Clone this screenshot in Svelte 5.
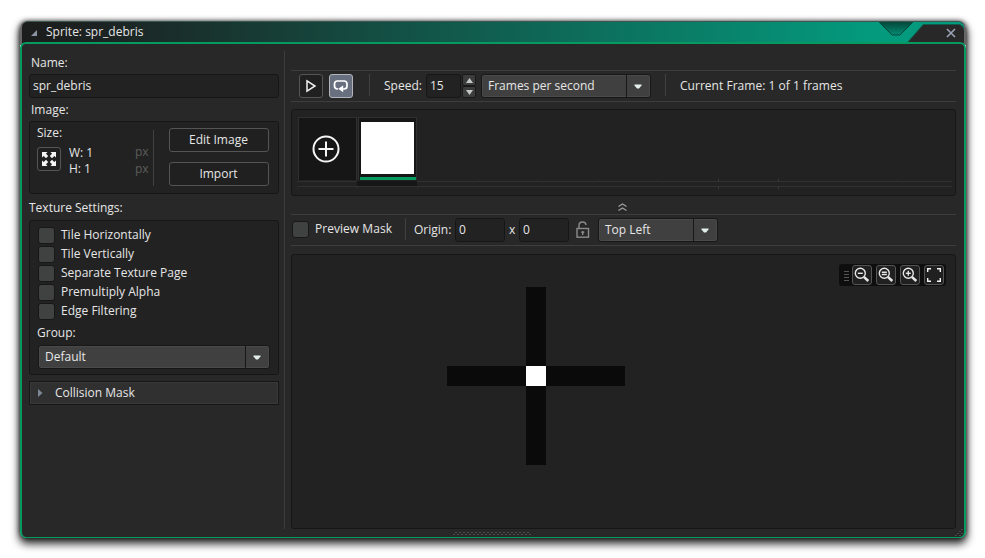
<script>
  const textureOptions = [
    'Tile Horizontally',
    'Tile Vertically',
    'Separate Texture Page',
    'Premultiply Alpha',
    'Edge Filtering'
  ];
  const zoomModes = ['out', 'reset', 'in'];
  let name = 'spr_debris';
</script>

{#snippet select(label, cls)}
  <div class="select {cls}">
    <span class="value">{label}</span>
    <span class="drop">
      <svg width="8" height="5" viewBox="0 0 8 5"><path d="M0.5 0.5h7v1L5 4.5H3L0.5 1.5z" fill="#e3efea" /></svg>
    </span>
  </div>
{/snippet}

<div class="desktop">
  <div class="window">
    <header class="titlebar">
      <svg class="fold" width="6" height="6"><path d="M6 0v6H0z" fill="#8b94a3" /></svg>
      <span class="title">Sprite: {name}</span>
      <svg class="decor" width="91" height="21" viewBox="1 0 91 21">
        <defs>
          <linearGradient id="notch" x1="0" y1="0" x2="0" y2="1">
            <stop offset="0" stop-color="#04483b" />
            <stop offset="1" stop-color="#048a72" />
          </linearGradient>
        </defs>
        <path d="M7 0l13 13h8L41 0z" fill="url(#notch)" />
        <path d="M7 0l13 13h8L41 0" fill="none" stroke="#04473a" />
        <path d="M51 2.500H88Q92 4 92 9V21H35z" fill="#282828" />
        <path d="M35 21L51.500 2.500H88l4 4" fill="none" stroke="#15594b" />
        <path d="M75 7l8 8M83 7l-8 8" stroke="#9aa3b3" stroke-width="1.600" />
      </svg>
    </header>

    <main class="body">
      <aside class="side">
        <div class="label name-label">Name:</div>
        <div class="input name-input">{name}</div>
        <div class="label image-label">Image:</div>
        <section class="panel image-panel">
          <div class="size">
            <div class="size-title">Size:</div>
            <div class="size-row">
              <button class="btn icon" aria-label="Resize">
                <svg width="14" height="14" viewBox="0 0 14 14" fill="#f4f4f4">
                  <path d="M0 0h5.500L4 1.700 6.200 4 4 6.200 1.700 4 0 5.500zM14 0H8.500L10 1.700 7.800 4 10 6.200 12.300 4 14 5.500zM0 14h5.500L4 12.300 6.200 10 4 7.800 1.700 10 0 8.500zM14 14H8.500L10 12.300 7.800 10 10 7.800 12.300 10 14 8.500z" />
                </svg>
              </button>
              <div class="dims"><div>W: 1</div><div>H: 1</div></div>
              <div class="units"><div>px</div><div>px</div></div>
            </div>
          </div>
          <div class="actions">
            <button class="btn">Edit Image</button>
            <button class="btn">Import</button>
          </div>
        </section>
        <div class="label texture-label">Texture Settings:</div>
        <section class="panel texture-panel">
          {#each textureOptions as option}
            <div class="option"><span class="check"></span><span>{option}</span></div>
          {/each}
          <div class="group-label">Group:</div>
          {@render select('Default', 'group')}
        </section>
        <div class="collision">
          <svg width="5" height="8"><path d="M0 0l4.500 4L0 8z" fill="#7f8897" /></svg>
          <span>Collision Mask</span>
        </div>
      </aside>

      <section class="content">
        <div class="bar playbar">
          <button class="btn icon play" aria-label="Play">
            <svg width="12" height="14" viewBox="0 0 12 14"><path d="M2 1.800v10.400L10 7z" fill="none" stroke="#f0f0f0" stroke-width="1.500" /></svg>
          </button>
          <button class="btn icon loop" aria-label="Loop">
            <svg width="16" height="14" viewBox="0 0 16 14"><path d="M5 10H4.500Q1.500 10 1.500 7V5Q1.500 2 4.500 2h6.500Q14 2 14 5v2Q14 10 11 10H9" fill="none" stroke="#fff" stroke-width="1.700" /><path d="M5.200 9.800l5-3.300v6.800z" fill="#fff" /></svg>
          </button>
          <i class="sep s1"></i>
          <span class="speed-label">Speed:</span>
          <div class="input speed">15</div>
          <div class="spin">
            <span><svg width="7" height="5"><path d="M0 5l3.500-5L7 5z" fill="#c3c8c6" /></svg></span>
            <span><svg width="7" height="5"><path d="M0 0l3.500 5L7 0z" fill="#c3c8c6" /></svg></span>
          </div>
          {@render select('Frames per second', 'fps')}
          <i class="sep s2"></i>
          <span class="current">Current Frame: 1 of 1 frames</span>
        </div>

        <section class="panel frames">
          <div class="cells">
            <div class="cell add">
              <svg width="28" height="28" viewBox="0 0 28 28" fill="none" stroke="#f5f5f5" stroke-width="2"><circle cx="14" cy="14" r="12.500" /><path d="M14 6.500v15M6.500 14h15" /></svg>
            </div>
            <div class="cell frame"><div class="thumb"></div><div class="active"></div></div>
          </div>
          <svg class="timeline" width="655" height="10">
            <rect x="60" y="2" width="60" height="5" fill="#161616" />
            <path d="M0 2.500H60M120 2.500H655M0 7.500H655" stroke="#303030" />
            <path d="M0.500 7v3M60.500 7v3M120.500 7v3M180.500 0v3M240.500 0v3M300.500 0v3M360.500 0v3M600.500 0v3" stroke="#2b2b2b" />
            <path d="M421.500 0v3M421.500 7v3M481.500 0v3M481.500 7v3" stroke="#383838" />
          </svg>
        </section>

        <div class="collapse">
          <svg width="9" height="8" fill="none" stroke="#a0a0a0" stroke-width="1.200"><path d="M0.500 3.500l4-2.500 4 2.500M0.500 7.500l4-2.500 4 2.500" /></svg>
        </div>

        <div class="bar originbar">
          <span class="check big"></span>
          <span class="preview">Preview Mask</span>
          <i class="sep s3"></i>
          <span class="origin">Origin:</span>
          <div class="input coord">0</div>
          <span class="times">x</span>
          <div class="input coord">0</div>
          <svg class="lock" width="14" height="18" fill="none" stroke="#8b8b8b" stroke-width="1.400"><rect x="1" y="7.500" width="11.500" height="8.700" /><path d="M3 7V4.500Q3 1 6.500 1Q9.800 1 10 4" /><path d="M6.700 10v4M5.300 11.200h2.900" /></svg>
          {@render select('Top Left', 'anchor')}
        </div>

        <section class="panel canvas">
          <div class="shape"><div class="pixel"></div></div>
          <div class="zoombar">
            <svg class="grip" width="5" height="11"><path d="M0 1.500h5M0 4.500h5M0 7.500h5M0 10.500h5" stroke="#555" /></svg>
            {#each zoomModes as mode}
              <button class="btn tool" aria-label="Zoom {mode}">
                <svg width="16" height="16" viewBox="0 0 16 16" fill="none" stroke="#e8e8e8" stroke-width="1.400">
                  <circle cx="6.300" cy="6.300" r="5" />
                  <path d="M10 10l4.300 4" stroke-width="2.400" />
                  {#if mode === 'reset'}
                    <path d="M3.800 5.200h5M3.800 7.500h5" />
                  {:else}
                    <path d="M3.800 6.300h5" />
                    {#if mode === 'in'}<path d="M6.300 3.800v5" />{/if}
                  {/if}
                </svg>
              </button>
            {/each}
            <button class="btn tool" aria-label="Fit">
              <svg width="14" height="14" fill="none" stroke="#f4f4f4" stroke-width="1.400"><path d="M.7 4V.7H4M10 .7h3.300V4M13.300 10v3.300H10M4 13.300H.7V10" /></svg>
            </button>
          </div>
        </section>
      </section>

      <svg class="dots" width="78" height="3"><path d="M2 .5H78" stroke="#4c4c4c" stroke-dasharray="2 2" /><path d="M0 2.500H78" stroke="#4c4c4c" stroke-dasharray="2 2" /></svg>
      <svg class="corner" width="8" height="7"><path d="M0 6.500h2M4 6.500h2M2 4.500h2M6 4.500h2M4 2.500h2M6 .5h2" stroke="#484848" /></svg>
    </main>
  </div>
</div>

<style>
  :global(body) { background: #fff; }
  * { box-sizing: border-box; }
  svg { display: block; flex: none; }
  .desktop {
    width: 985px; height: 558px; padding: 21px 0 0 20px; overflow: hidden;
    font: 12px/18px 'Open Sans', sans-serif; color: #e6e6e6; white-space: nowrap;
  }
  .window {
    width: 946px; height: 517px; border-radius: 7px;
    background: linear-gradient(#666, #666) 0 0 / 100% 24px no-repeat;
    box-shadow: 0 0 5px rgba(0, 0, 0, .75), 0 5px 9px 1px rgba(0, 0, 0, .8);
  }
  .titlebar {
    position: relative; height: 22px; margin: 0 2px; padding: 0 0 0 9px;
    display: flex; align-items: center; gap: 9px; overflow: hidden;
    border-radius: 6px 6px 0 0; border-top: 1px solid #3b5951;
    background: linear-gradient(90deg, #1c1c1c 0, #1c2322 80px, #049a7d 850px, #049a7d);
  }
  .fold { margin-top: 1px; }
  .title { margin-top: -2px; }
  .decor { position: absolute; right: 0; top: 0; }
  .body {
    position: relative; height: 496px; margin-top: -1px; display: flex;
    border: 2px solid #049a60; border-bottom-width: 1px; border-radius: 6px;
    background: #282828;
  }
  .side {
    width: 263px; height: 478px; margin-top: 7px; padding: 3px 5px 0 7px;
    border-right: 1px solid #3d3d3d; flex: none;
  }
  .label { padding-left: 2px; height: 18px; }
  .name-input { margin-top: 2px; height: 24px; padding-left: 3px; }
  .image-label { margin-top: 3px; }
  .input, .panel { background: #222; border: 1px solid #161616; border-radius: 3px; }
  .input { line-height: 22px; }
  .image-panel { margin-top: 2px; height: 73px; padding: 8px 9px 7px 7px; display: flex; }
  .size { width: 117px; height: 56px; border-right: 1px solid #414141; }
  .size-title { line-height: 14px; margin-top: -4px; }
  .size-row { display: flex; margin-top: 6px; }
  .btn {
    display: flex; align-items: center; justify-content: center; padding: 0;
    font: inherit; color: inherit; background: #202020; border: 1px solid #555; border-radius: 3px;
  }
  .icon { width: 24px; height: 24px; margin-top: 1px; flex: none; }
  .dims { line-height: 16px; margin: -1px 0 0 8px; width: 66px; }
  .units { line-height: 17px; margin-top: -3px; color: #5c5c5c; }
  .actions { margin-left: 15px; margin-top: -2px; display: flex; flex-direction: column; gap: 10px; }
  .actions .btn { width: 100px; height: 24px; padding-right: 1px; }
  .texture-label { margin-top: 5px; padding: 0; }
  .texture-panel { margin-top: 3px; height: 155px; padding: 4px 8px 0; }
  .option { display: flex; align-items: center; height: 19px; gap: 6px; }
  .check {
    width: 17px; height: 17px; background: #3f4241; border: 1px solid #171717;
    border-radius: 3px; flex: none; margin-top: 2px;
  }
  .group-label { margin: 4px 0 0 -1px; }
  .select {
    display: flex; height: 24px; border: 1px solid #171717; border-radius: 3px; background: #404040;
    line-height: 21px; box-shadow: inset 0 0 0 1px #4a4a4a; flex: none;
  }
  .value { flex: 1; padding-left: 6px; }
  .drop {
    width: 24px; padding-right: 1px; border-left: 1px solid #171717; display: flex;
    align-items: center; justify-content: center;
  }
  .group { width: 232px; margin-top: 3px; }
  .collision {
    height: 24px; margin-top: 6px; padding-left: 8px; display: flex; align-items: center; gap: 12px;
    border: 1px solid #161616; background: #303030; box-shadow: inset 0 0 0 1px #393939;
  }
  .content { width: 665px; margin: 26px 0 0 6px; display: flex; flex-direction: column; }
  .bar { height: 32px; border: solid #3d3d3d; border-width: 1px 0; display: flex; align-items: flex-start; flex: none; }
  .playbar { padding: 3px 0 0 8px; }
  .playbar .icon { margin-top: 0; }
  .btn.loop { margin-left: 6px; background: #687080; border-color: #b2b6bc; }
  .sep { width: 1px; height: 22px; background: #414141; flex: none; }
  .s1 { margin-left: 16px; }
  .speed-label { margin: 3px 0 0 14px; width: 42px; }
  .speed { width: 35px; height: 24px; padding-left: 3px; }
  .spin { display: flex; flex-direction: column; width: 14px; margin-left: 1px; }
  .spin span {
    height: 12px; display: flex; align-items: center; justify-content: center;
    background: #3c3c3c; border: 1px solid #191919; border-radius: 2px;
  }
  .fps { width: 170px; margin-left: 5px; }
  .s2 { margin-left: 14px; }
  .current { margin: 3px 0 0 14px; letter-spacing: .03px; }
  .frames { height: 87px; margin-top: 7px; padding: 7px 0 0 5px; flex: none; }
  .cells { display: flex; padding-left: 1px; gap: 1px; }
  .cell { width: 59px; height: 63px; background: #161616; border: 1px solid #303030; border-bottom: 0; }
  .add { display: flex; align-items: center; justify-content: center; }
  .add svg { margin: 0 3px 1px 0; }
  .frame { padding: 4px 1px 0; display: flex; flex-direction: column; align-items: center; margin-bottom: 0; }
  .thumb { width: 53px; height: 53px; background: #fff; }
  .active { width: 56px; height: 3px; margin-top: 3px; background: #049a60; flex: none; }
  .timeline { margin-top: -1px; }
  .collapse { height: 18px; display: flex; justify-content: center; padding: 7px 2px 0 0; flex: none; }
  .originbar { padding: 3px 0 0 1px; }
  .check.big { margin-top: 3px; }
  .preview { margin: 2px 0 0 6px; width: 90px; letter-spacing: .04px; }
  .s3 { margin-left: 0; }
  .origin { margin: 3px 0 0 8px; width: 41px; }
  .coord { width: 50px; height: 24px; padding-left: 3px; flex: none; }
  .times { width: 14px; padding: 3px 0 0 4px; }
  .lock { margin: 3px 0 0 7px; }
  .anchor { width: 120px; margin-left: 8px; }
  .canvas { position: relative; height: 275px; margin-top: 8px; flex: none; }
  .shape {
    position: absolute; left: 155px; top: 32px; width: 178px; height: 178px;
    display: grid; place-items: center;
    background: linear-gradient(#0a0a0a, #0a0a0a) 79px 0 / 20px 178px no-repeat,
      linear-gradient(#0a0a0a, #0a0a0a) 0 79px / 178px 20px no-repeat;
  }
  .pixel { width: 20px; height: 20px; background: #fff; }
  .zoombar {
    position: absolute; right: 9px; top: 9px; width: 107px; height: 22px; padding: 0 2px 0 5px;
    display: flex; align-items: center; gap: 4px; background: #0e0e0e; border-radius: 3px;
  }
  .grip { margin-right: -1px; }
  .tool { width: 20px; height: 20px; flex: none; }
  .dots { position: absolute; left: 431px; bottom: 2px; }
  .corner { position: absolute; right: 1px; bottom: 1px; }
</style>
